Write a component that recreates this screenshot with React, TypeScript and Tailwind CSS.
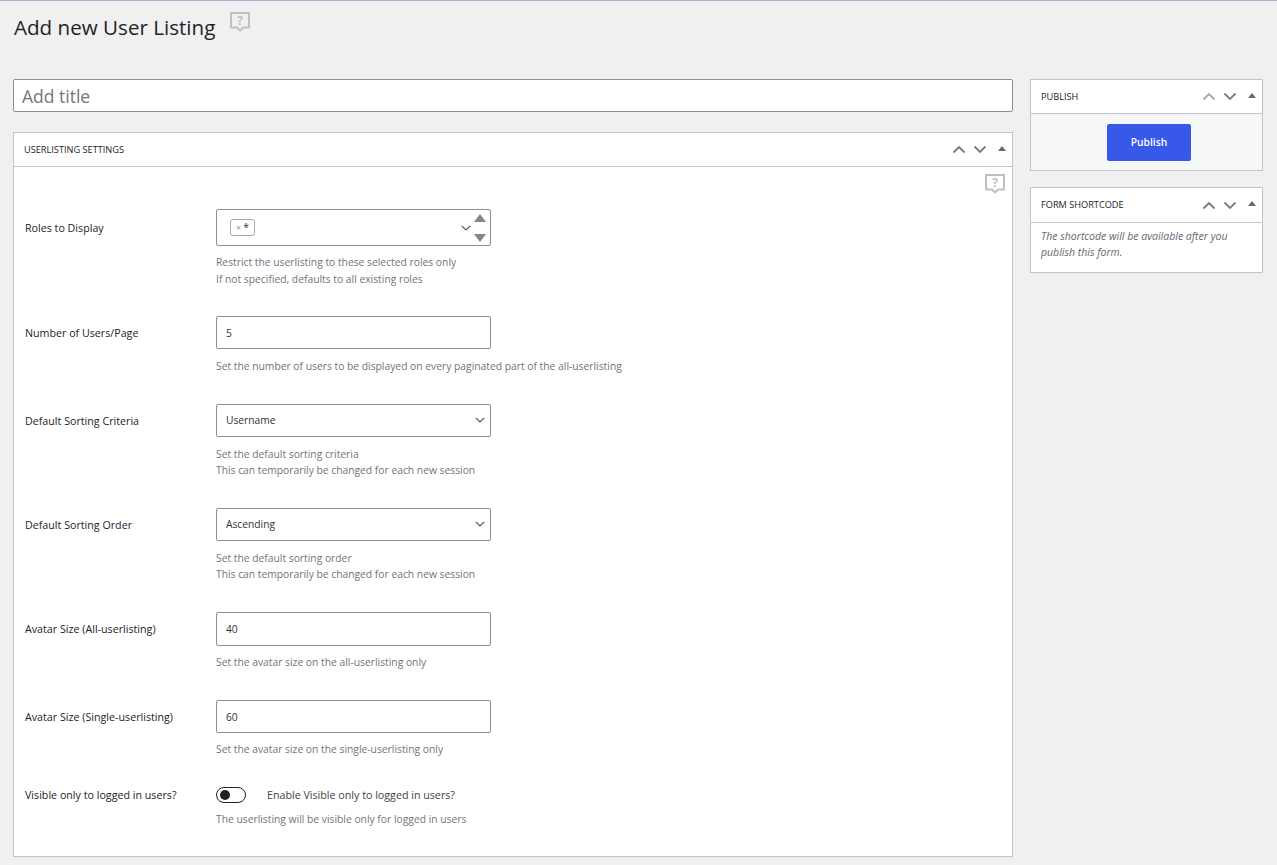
import { ReactNode } from 'react';

const font = { fontFamily: '"Open Sans", "Noto Sans", sans-serif' };

function HelpIcon({ className }: { className?: string }) {
  return (
    <svg className={className} width="22" height="22" viewBox="0 0 22 22" fill="none">
      <path d="M2 2h18v14.500h-6l-3 3-3-3H2z" stroke="#bfc0c2" strokeWidth="2" strokeLinejoin="round" />
      <text x="11" y="13.500" textAnchor="middle" fontSize="12" fontWeight="700" fill="#bfc0c2" fontFamily="Open Sans, sans-serif">?</text>
    </svg>
  );
}

function BoxControls({ upColor = '#787c82' }: { upColor?: string }) {
  return (
    <div className="flex items-center">
      <svg width="14" height="9" viewBox="0 0 14 9" fill="none" className="mr-[7px]">
        <path d="M1.500 7.500 7 2l5.500 5.500" stroke={upColor} strokeWidth="1.800" />
      </svg>
      <svg width="14" height="9" viewBox="0 0 14 9" fill="none" className="mr-[11px]">
        <path d="M1.500 1.500 7 7l5.500-5.500" stroke="#787c82" strokeWidth="1.800" />
      </svg>
      <span className="mb-[3px] h-0 w-0 border-x-[4px] border-b-[5px] border-x-transparent border-b-[#646970]" />
    </div>
  );
}

function Chevron() {
  return (
    <svg width="10" height="6" viewBox="0 0 10 6" fill="none">
      <path d="M.8.800 5 5l4.200-4.200" stroke="#50575e" strokeWidth="1.200" />
    </svg>
  );
}

function Row({ label, children, help, className = 'mb-[29px]', labelClass = 'pt-[9px]', helpClass = 'mt-[9px]' }: { label: string; children: ReactNode; help: string[]; className?: string; labelClass?: string; helpClass?: string }) {
  return (
    <div className={`flex ${className}`}>
      <label className={`w-[191px] shrink-0 text-[10.700px] font-medium leading-[16px] text-[#1d2327] ${labelClass}`}>{label}</label>
      <div className="w-[275px]">
        {children}
        <div className={`whitespace-nowrap text-[10.300px] leading-[16.500px] text-[#6f757a] ${helpClass}`}>
          {help.map((h) => (
            <p key={h}>{h}</p>
          ))}
        </div>
      </div>
    </div>
  );
}

function TextField({ value, tall }: { value: string; tall?: boolean }) {
  return (
    <div className={`flex items-center rounded-[2px] border border-[#8c8f94] bg-white px-[9px] pt-[2px] text-[10.250px] text-[#2c3338] ${tall ? 'h-[34px]' : 'h-[33px]'}`}>
      {value}
    </div>
  );
}

function SelectField({ value }: { value: string }) {
  return (
    <div className="flex h-[33px] items-center justify-between rounded-[2px] border border-[#8c8f94] bg-white pl-[9px] pr-[5px] text-[10.250px] text-[#2c3338]">
      <span className="pt-[1px]">{value}</span>
      <Chevron />
    </div>
  );
}

function SideBox({ title, upColor, headerClass = 'h-[34px]', children }: { title: string; upColor?: string; headerClass?: string; children: ReactNode }) {
  return (
    <section className="border border-[#c3c4c7] bg-white">
      <header className={`flex items-center justify-between border-b border-[#c3c4c7] pl-[10px] pr-[6px] ${headerClass}`}>
        <h2 className="text-[9.200px] font-medium uppercase text-[#1d2327]">{title}</h2>
        <BoxControls upColor={upColor} />
      </header>
      {children}
    </section>
  );
}

export default function App() {
  return (
    <div style={font} className="h-[865px] overflow-hidden border-t border-t-[#a5b4d0] bg-[#f0f0f1]">
      <div className="flex h-[78px] items-start pl-[14px]">
        <h1 className="mt-[11px] text-[20.600px] leading-[30px] text-[#1d2327]">Add new User Listing</h1>
        <HelpIcon className="ml-[14px] mt-[10px]" />
      </div>

      <div className="flex items-start pl-[13px]">
        <main className="w-[1000px]">
          <div className="flex h-[33px] items-center rounded-[2px] border border-[#8c8f94] bg-white pl-[8px] pt-[1px] text-[17.500px] text-[#72777c]">
            Add title
          </div>

          <section className="mt-[20px] h-[725px] border border-[#c3c4c7] bg-white">
            <header className="flex h-[34px] items-center justify-between border-b border-[#c3c4c7] pl-[10px] pr-[6px]">
              <h2 className="text-[9.200px] font-medium uppercase text-[#1d2327]">Userlisting Settings</h2>
              <BoxControls />
            </header>

            <div className="relative pl-[11px] pt-[42px]">
              <HelpIcon className="absolute right-[6px] top-[6px]" />

              <Row
                label="Roles to Display"
                labelClass="pt-[11px]"
                helpClass="mt-[8px]"
                help={['Restrict the userlisting to these selected roles only', 'If not specified, defaults to all existing roles']}
              >
                <div className="relative flex h-[37px] items-center rounded-[2px] border border-[#8c8f94] bg-white pl-[13px]">
                  <span className="flex h-[17px] items-center rounded-[3px] border border-[#a7aaad] px-[5px] text-[10.500px] leading-none text-[#2c3338]">
                    <span className="mr-[2px] text-[9px] text-[#8c8f94]">×</span>*
                  </span>
                  <span className="absolute right-[19px] top-[15px]">
                    <Chevron />
                  </span>
                  <span className="absolute right-[4px] top-[4px] h-0 w-0 border-x-[6px] border-b-[8px] border-x-transparent border-b-[#82878c]" />
                  <span className="absolute bottom-[3px] right-[4px] h-0 w-0 border-x-[6px] border-t-[8px] border-x-transparent border-t-[#82878c]" />
                </div>
              </Row>

              <Row label="Number of Users/Page" help={['Set the number of users to be displayed on every paginated part of the all-userlisting']}>
                <TextField value="5" />
              </Row>

              <Row label="Default Sorting Criteria" help={['Set the default sorting criteria', 'This can temporarily be changed for each new session']}>
                <SelectField value="Username" />
              </Row>

              <Row label="Default Sorting Order" help={['Set the default sorting order', 'This can temporarily be changed for each new session']}>
                <SelectField value="Ascending" />
              </Row>

              <Row label="Avatar Size (All-userlisting)" className="mb-[30px]" helpClass="mt-[8px]" help={['Set the avatar size on the all-userlisting only']}>
                <TextField value="40" tall />
              </Row>

              <Row label="Avatar Size (Single-userlisting)" helpClass="mt-[8px]" help={['Set the avatar size on the single-userlisting only']}>
                <TextField value="60" />
              </Row>

              <div className="flex">
                <label className="w-[191px] shrink-0 text-[10.700px] font-medium leading-[16px] text-[#1d2327]">Visible only to logged in users?</label>
                <div>
                  <div className="flex h-[16px] items-center">
                    <span className="flex h-[16px] w-[30px] items-center rounded-full border border-[#1d2327] pl-[3px]">
                      <span className="h-[10px] w-[10px] rounded-full bg-[#1d2327]" />
                    </span>
                    <span className="ml-[21px] pt-[1px] text-[10.700px] text-[#3c434a]">Enable Visible only to logged in users?</span>
                  </div>
                  <p className="mt-[8px] text-[10.300px] leading-[16.500px] text-[#6f757a]">The userlisting will be visible only for logged in users</p>
                </div>
              </div>
            </div>
          </section>
        </main>

        <aside className="ml-[17px] flex w-[233px] flex-col gap-[16px]">
          <SideBox title="Publish" upColor="#a7aaad">
            <div className="flex h-[56px] items-center justify-center bg-[#f6f7f7] pl-[5px]">
              <button className="h-[37px] w-[84px] rounded-[2px] bg-[#3858e9] pt-[1px] text-[10.250px] font-semibold text-white">Publish</button>
            </div>
          </SideBox>

          <SideBox title="Form Shortcode" headerClass="h-[35px]">
            <p className="h-[49px] px-[10px] pt-[5px] text-[10.500px] italic leading-[16px] text-[#646970]">
              The shortcode will be available after you publish this form.
            </p>
          </SideBox>
        </aside>
      </div>
    </div>
  );
}
